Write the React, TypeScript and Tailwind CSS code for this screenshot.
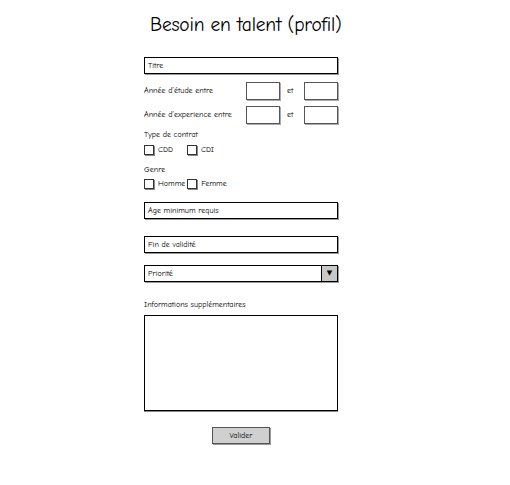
const font = "font-['Comic_Sans_MS','Comic_Neue','DejaVu_Sans',sans-serif]";

function Field({ label }: { label: string }) {
  return (
    <div className="h-[17px] w-[194px] border border-black bg-white px-[3px] text-[8px] leading-[15px] shadow-[1px_1px_0_#9a9a9a]">
      {label}
    </div>
  );
}

function SmallBox() {
  return <div className="h-[18px] w-[34px] border border-[#555] bg-white shadow-[1px_1px_0_#aaa]" />;
}

function Check({ label }: { label: string }) {
  return (
    <div className="flex items-center gap-[4px]">
      <div className="h-[10px] w-[10px] border border-[#333] bg-white shadow-[1px_1px_0_#888]" />
      <span className="text-[8px] leading-[10px]">{label}</span>
    </div>
  );
}

export default function App() {
  return (
    <div className={`h-[485px] w-[510px] bg-white text-black ${font}`}>
      <div className="ml-[144px] flex w-[194px] flex-col">
        <h1 className="mt-[12px] ml-[6px] whitespace-nowrap text-[19.5px] leading-[26px] tracking-[-0.2px]">Besoin en talent (profil)</h1>

        <div className="mt-[19px]">
          <Field label="Titre" />
        </div>

        {/* années */}
        <div className="mt-[8px] flex items-center">
          <span className="w-[102px] text-[8px]">Année d'étude entre</span>
          <SmallBox />
          <span className="w-[24px] pl-[7px] text-[8px]">et</span>
          <SmallBox />
        </div>
        <div className="mt-[6px] flex items-center">
          <span className="w-[102px] whitespace-nowrap text-[8px]">Année d'experience entre</span>
          <SmallBox />
          <span className="w-[24px] pl-[7px] text-[8px]">et</span>
          <SmallBox />
        </div>

        <div className="mt-[6px] text-[8px] leading-[10px]">Type de contrat</div>
        <div className="mt-[5px] flex gap-[14px]">
          <Check label="CDD" />
          <Check label="CDI" />
        </div>

        <div className="mt-[10px] text-[8px] leading-[10px]">Genre</div>
        <div className="mt-[4px] flex gap-[2px]">
          <Check label="Homme" />
          <Check label="Femme" />
        </div>

        <div className="mt-[13px]">
          <Field label="Age minimum requis" />
        </div>
        <div className="mt-[17px]">
          <Field label="Fin de validité" />
        </div>

        <div className="mt-[12px] flex h-[17px] w-[194px] border border-black bg-white shadow-[1px_1px_0_#9a9a9a]">
          <span className="flex-1 px-[3px] text-[8px] leading-[15px]">Priorité</span>
          <div className="flex w-[16px] items-center justify-center border-l border-black bg-[#c8c8c8] text-[7px]">▼</div>
        </div>

        <div className="mt-[18px] text-[8px] leading-[10px]">Informations supplémentaires</div>
        <div className="mt-[5px] h-[96px] w-[194px] border-[1.5px] border-black bg-white shadow-[0_1px_0_#888]" />

        <div className="mt-[16px] flex justify-center">
          <button className="h-[17px] w-[58px] border border-[#555] bg-[#d0d0d0] text-[8px] leading-[15px] shadow-[1px_1px_0_#999]">
            Valider
          </button>
        </div>
      </div>
    </div>
  );
}
